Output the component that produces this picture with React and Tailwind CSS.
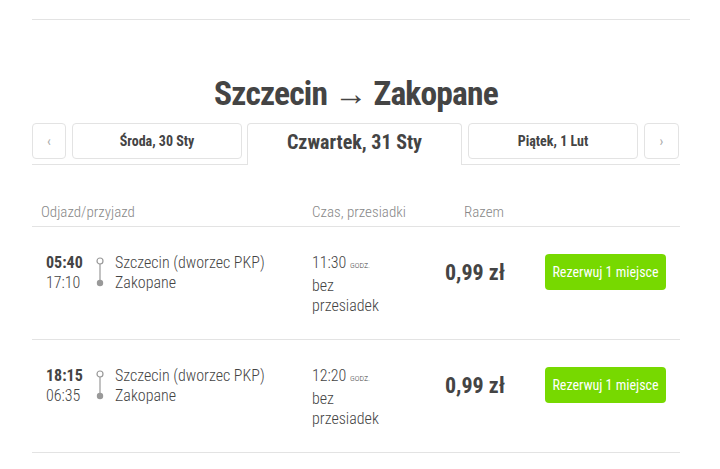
export default function App() {
  const trips = [
    { dep: "05:40", arr: "17:10", dur: "11:30", price: "0,99 zł" },
    { dep: "18:15", arr: "06:35", dur: "12:20", price: "0,99 zł" },
  ];

  return (
    <div className="min-h-screen bg-white text-[#444] font-['Roboto','Liberation_Sans',sans-serif] font-stretch-condensed">
      <div className="w-[648px] ml-8 pt-[19px]">
        {/* top rule */}
        <div className="w-[658px] border-t border-[#e3e3e3]" />

        {/* title */}
        <h1 className="mt-[50px] h-[48px] text-center text-[33.5px] leading-[48px] font-bold tracking-tight">
          Szczecin → Zakopane
        </h1>

        {/* day tabs */}
        <div className="mt-[5px] flex items-start border-b border-[#e3e3e3]">
          <button className="w-[34px] h-9 rounded border border-[#e3e3e3] text-[#aaa] text-sm">
            ‹
          </button>
          <button className="ml-[6px] w-[170px] h-9 rounded border border-[#e3e3e3] text-sm font-bold">
            Środa, 30 Sty
          </button>
          <button className="ml-[5px] w-[215px] h-[42px] -mb-px rounded-t border border-b-0 border-[#e3e3e3] bg-white text-xl font-bold pb-[6px]">
            Czwartek, 31 Sty
          </button>
          <button className="ml-[6px] w-[170px] h-9 rounded border border-[#e3e3e3] text-sm font-bold">
            Piątek, 1 Lut
          </button>
          <button className="ml-[6px] w-[35px] h-9 rounded border border-[#e3e3e3] text-[#aaa] text-sm">
            ›
          </button>
        </div>

        {/* header */}
        <div className="mt-[34px] flex items-center h-[26px] pl-[9px] text-[15px] font-light text-[#888] border-b border-[#e3e3e3] pb-[1px] box-content">
          <div className="w-[271px]">Odjazd/przyjazd</div>
          <div className="w-[152px]">Czas, przesiadki</div>
          <div>Razem</div>
        </div>

        {/* trips */}
        {trips.map((t, i) => (
          <div
            key={i}
            className="flex items-start h-[113px] pt-[26px] pl-[14px] border-b border-[#e3e3e3] text-base leading-5"
          >
            <div className="w-[49px]">
              <div className="font-bold">{t.dep}</div>
              <div className="font-light">{t.arr}</div>
            </div>
            <svg width="10" height="32" viewBox="0 0 10 32" className="mt-[3px]">
              <circle cx="5" cy="5" r="3" fill="none" stroke="#999" strokeWidth="1.2" />
              <line x1="5" y1="8" x2="5" y2="26" stroke="#999" strokeWidth="1.2" />
              <circle cx="5" cy="27" r="3.2" fill="#999" />
            </svg>
            <div className="ml-[10px] w-[197px] font-light">
              <div>Szczecin (dworzec PKP)</div>
              <div>Zakopane</div>
            </div>
            <div className="w-[133px] font-light">
              <div>
                {t.dur} <span className="text-[8px] uppercase">godz.</span>
              </div>
              <div>bez</div>
              <div>przesiadek</div>
            </div>
            <div className="w-[100px] pt-[10px] text-[22px] font-bold">
              {t.price}
            </div>
            <button className="w-[121px] h-9 rounded bg-[#77d900] text-white text-sm font-normal mt-[1px]">
              Rezerwuj 1 miejsce
            </button>
          </div>
        ))}
      </div>
    </div>
  );
}
